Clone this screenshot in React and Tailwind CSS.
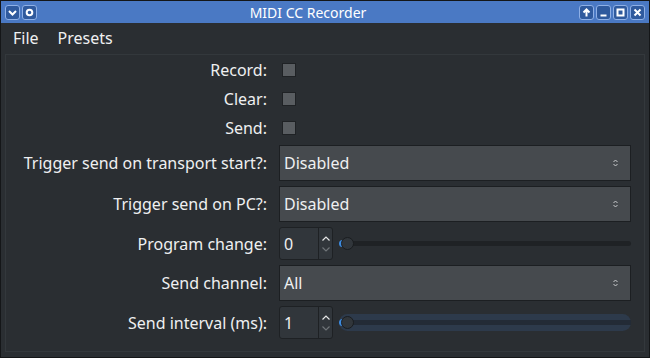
import React from 'react';

const font = { fontFamily: '"Noto Sans", "Open Sans", sans-serif' };

const TitleButton = ({ children }) => (
  <div className="w-[15px] h-[15px] rounded-[3px] border border-[#8fb0e6] bg-[#2f5a9e] flex items-center justify-center">
    <svg width="9" height="9" viewBox="0 0 9 9" fill="none" stroke="white" strokeWidth="2">
      {children}
    </svg>
  </div>
);

const Checkbox = () => (
  <div className="flex items-center h-full">
    <div className="ml-[3px] w-[14px] h-[14px] bg-[#595d61] border border-[#1f2225]" />
  </div>
);

const Combo = ({ value }) => (
  <div className="h-full flex items-center justify-between bg-[#464a4e] border border-[#1c1f22] pl-[4px] pr-[12px]">
    <span className="text-[16px] text-[#eff0f1]">{value}</span>
    <svg width="5" height="8" viewBox="0 0 5 8" fill="none" stroke="#c8cacc" strokeWidth="1">
      <path d="M0.5 3 L2.5 1 L4.5 3" />
      <path d="M0.5 5 L2.5 7 L4.5 5" />
    </svg>
  </div>
);

const SpinSlider = ({ value, focused }) => (
  <div className="h-full flex items-center gap-[6px]">
    <div className="w-[54px] h-full flex bg-[#31363b] border border-[#1e2124] rounded-[3px]">
      <div className="flex-1 flex items-center pl-[4px] text-[16px] text-[#eff0f1]">{value}</div>
      <div className="w-[14px] border-l border-[#1e2124] flex flex-col items-center justify-center gap-[6px]">
        <svg width="8" height="5" viewBox="0 0 8 5" fill="none" stroke="#e6e7e8" strokeWidth="1.2">
          <path d="M0.5 4.5 L4 1 L7.5 4.5" />
        </svg>
        <svg width="8" height="5" viewBox="0 0 8 5" fill="none" stroke="#6f7478" strokeWidth="1.2">
          <path d="M0.5 0.5 L4 4 L7.5 0.5" />
        </svg>
      </div>
    </div>
    <div
      className={
        focused
          ? 'flex-1 h-[17px] rounded-full bg-[#2d3a4b] flex items-center'
          : 'flex-1 h-[17px] flex items-center'
      }
    >
      <div className={focused ? 'relative flex-1 h-[5px] bg-[#232b36]' : 'relative flex-1 h-[5px] rounded-full bg-[#1f2225]'}>
        <div className="absolute left-0 top-[-1px] w-[4px] h-[7px] rounded-l-full bg-[#3d8be0]" />
        <div className="absolute left-[2px] top-[-4px] w-[13px] h-[13px] rounded-full bg-[#31363b] border border-[#1a1d20]" />
      </div>
    </div>
  </div>
);

const Label = ({ children }) => (
  <div className="flex items-center justify-end whitespace-nowrap text-[16px] text-[#eff0f1]">{children}</div>
);

export default function App() {
  return (
    <div style={font} className="w-[650px] h-[358px] bg-[#2a2e32] border border-[#141618] flex flex-col overflow-hidden">
      {/* title bar */}
      <div className="h-[22px] bg-[#4a79c4] flex items-center px-[4px] shrink-0">
        <div className="flex gap-[2px]">
          <TitleButton>
            <path d="M1 3 L4.5 6.5 L8 3" />
          </TitleButton>
          <TitleButton>
            <circle cx="4.5" cy="4.5" r="2.8" />
          </TitleButton>
        </div>
        <div className="flex-1 text-center text-[14px] text-white">MIDI CC Recorder</div>
        <div className="flex gap-[2px]">
          <TitleButton>
            <path d="M4.5 8.5 L4.5 1.5 M1.5 4.5 L4.5 1.5 L7.5 4.5" />
          </TitleButton>
          <TitleButton>
            <path d="M1.5 7.5 L7.5 7.5" />
          </TitleButton>
          <TitleButton>
            <rect x="1.5" y="1.5" width="6" height="6" />
          </TitleButton>
          <TitleButton>
            <path d="M1.5 1.5 L7.5 7.5 M7.5 1.5 L1.5 7.5" />
          </TitleButton>
        </div>
      </div>

      {/* menu bar */}
      <div className="h-[30px] flex items-center gap-[19px] px-[12px] text-[16px] text-[#eff0f1] shrink-0">
        <span>File</span>
        <span>Presets</span>
      </div>

      {/* form frame */}
      <div className="mx-[4px] mt-[1px] mb-[5px] flex-1 border border-[#33383c] pt-[3px] pl-[18px]">
        <div className="grid grid-cols-[243px_352px] gap-x-[12px] gap-y-[5px] grid-rows-[24px_24px_24px_36px_36px_33px_36px_33px]">
          <Label>Record:</Label>
          <Checkbox />
          <Label>Clear:</Label>
          <Checkbox />
          <Label>Send:</Label>
          <Checkbox />
          <Label>Trigger send on transport start?:</Label>
          <Combo value="Disabled" />
          <Label>Trigger send on PC?:</Label>
          <Combo value="Disabled" />
          <Label>Program change:</Label>
          <SpinSlider value="0" />
          <Label>Send channel:</Label>
          <Combo value="All" />
          <Label>Send interval (ms):</Label>
          <SpinSlider value="1" focused />
        </div>
      </div>
    </div>
  );
}
